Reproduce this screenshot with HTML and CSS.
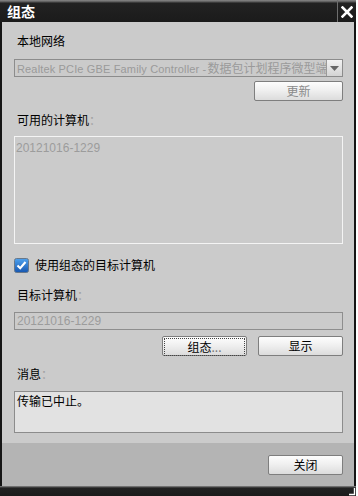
FILE: index.html
```html
<!DOCTYPE html>
<html lang="zh">
<head>
<meta charset="utf-8">
<link rel="stylesheet" href="styles.css">
</head>
<body>
<div class="window">
  <div class="titlebar">
    <div class="title">组态</div>
    <div class="close">
      <svg width="12" height="12" viewBox="0 0 12 12"><path d="M1.5 1.5 L10.5 10.5 M10.5 1.5 L1.5 10.5" stroke="#fff" stroke-width="2.6" stroke-linecap="square"/></svg>
    </div>
  </div>
  <div class="content">
    <div class="label l1">本地网络</div>
    <div class="select">
      <div class="select-text">Realtek PCIe GBE Family Controller -<span class="cjk">数据包计划程序微型端</span></div>
      <div class="select-arrow"><svg width="9" height="5" viewBox="0 0 9 5"><path d="M0 0 H9 L4.5 5 Z" fill="#666"/></svg></div>
    </div>
    <div class="row-right"><div class="btn btn-refresh">更新</div></div>
    <div class="label l2">可用的计算机<span class="colon">：</span></div>
    <div class="listbox">20121016-1229</div>
    <div class="check-row">
      <svg class="checkbox" width="15" height="15" viewBox="0 0 15 15">
        <defs><linearGradient id="cb" x1="0" y1="0" x2="0" y2="1"><stop offset="0" stop-color="#4fa2ee"/><stop offset="1" stop-color="#1656b0"/></linearGradient></defs>
        <rect x="0.5" y="0.5" width="14" height="14" rx="2" fill="url(#cb)" stroke="#68788a"/>
        <path d="M3.5 7.5 L6.2 10.2 L11.5 4" stroke="#fff" stroke-width="2.1" fill="none"/>
      </svg>
      <span class="check-label">使用组态的目标计算机</span>
    </div>
    <div class="label l3">目标计算机<span class="colon">：</span></div>
    <div class="field">20121016-1229</div>
    <div class="row-right btn-row">
      <div class="btn btn-mid focus"><span class="focus-ring">组态<span class="dots">...</span></span></div>
      <div class="btn btn-mid">显示</div>
    </div>
    <div class="label l4">消息<span class="colon">：</span></div>
    <div class="msgbox">传输已中止。</div>
  </div>
  <div class="footer">
    <div class="btn btn-close">关闭</div>
  </div>
  <div class="bottombar">
    <svg class="grip" width="7" height="8" viewBox="0 0 7 8"><path d="M5.5 0 V6.5 H0" stroke="#fff" stroke-width="1.4" fill="none"/></svg>
  </div>
</div>
</body>
</html>
```

FILE: styles.css
```css
html, body {
  margin: 0;
  padding: 0;
  background: #ffffff;
}
body {
  font-family: "Liberation Sans", "Noto Sans CJK SC", sans-serif;
  font-size: 12px;
  color: #000;
}
.window {
  width: 356px;
  height: 496px;
  display: flex;
  flex-direction: column;
  position: relative;
}
.titlebar {
  height: 22px;
  flex: none;
  display: flex;
  background: linear-gradient(to bottom, #8a8a8a 0, #555 2px, #222 3px, #1b1b1b 100%);
}
.title {
  flex: 1;
  color: #fff;
  font-family: "Noto Sans CJK SC", sans-serif;
  font-weight: bold;
  font-size: 14px;
  line-height: 22px;
  padding-left: 7px;
}
.close {
  width: 18px;
  border-left: 1px solid #6e6e6e;
  display: flex;
  align-items: center;
  justify-content: center;
  padding-top: 1px;
}
.content {
  flex: none;
  height: 421px;
  box-sizing: border-box;
  background: #cbcbcb;
  border-left: 2px solid #151515;
  border-right: 2px solid #151515;
  padding: 0 11px 0 12px;
  display: flex;
  flex-direction: column;
}
.label {
  height: 16px;
  line-height: 16px;
  font-family: "Noto Sans CJK SC", sans-serif;
  font-size: 12px;
  padding-left: 3px;
}
.colon { color: #a0a0a0; }
.l1 { margin-top: 11px; }
.select {
  margin-top: 10px;
  height: 18px;
  border: 1px solid #8c8c8c;
  display: flex;
  box-sizing: border-box;
  overflow: hidden;
}
.select-text {
  flex: 1;
  white-space: nowrap;
  overflow: hidden;
  color: #9a9a9a;
  font-size: 11px;
  line-height: 16px;
  padding-left: 2px;
  letter-spacing: 0.15px;
}
.select-text .cjk {
  font-family: "Noto Sans CJK SC", sans-serif;
  font-size: 12px;
  letter-spacing: 0;
  margin-left: 1px;
}
.select-arrow {
  width: 15px;
  flex: none;
  border-left: 1px solid #9a9a9a;
  background: linear-gradient(to bottom, #f2f2f2, #d4d4d4);
  display: flex;
  align-items: center;
  justify-content: center;
}
.row-right {
  display: flex;
  justify-content: flex-end;
}
.btn {
  box-sizing: border-box;
  height: 20px;
  border: 1px solid #7e7e7e;
  border-radius: 2px;
  background: linear-gradient(to bottom, #fdfdfd 0%, #f0f0f0 45%, #dcdcdc 100%);
  font-family: "Noto Sans CJK SC", sans-serif;
  font-size: 12px;
  line-height: 18px;
  text-align: center;
  color: #000;
}
.btn-refresh {
  margin-top: 4px;
  width: 89px;
  color: #8a8a8a;
}
.l2 { margin-top: 11px; }
.listbox {
  margin-top: 8px;
  height: 108px;
  box-sizing: border-box;
  border: 1px solid #f4f4f4;
  color: #9c9c9c;
  padding: 3px 0 0 1px;
  line-height: 16px;
}
.check-row {
  margin-top: 13px;
  height: 16px;
  display: flex;
  align-items: center;
}
.checkbox {
  flex: none;
  margin-top: 1px;
}
.check-label {
  margin-left: 6px;
  font-family: "Noto Sans CJK SC", sans-serif;
  line-height: 16px;
}
.l3 { margin-top: 14px; }
.field {
  margin-top: 9px;
  height: 18px;
  box-sizing: border-box;
  border: 1px solid #8e8e8e;
  color: #9c9c9c;
  line-height: 16px;
  padding-left: 2px;
}
.btn-row {
  margin-top: 6px;
  gap: 11px;
}
.btn-mid {
  width: 85px;
}
.focus {
  padding: 1px;
}
.focus-ring {
  display: block;
  height: 16px;
  line-height: 16px;
  border: 1px dotted #444;
}
.dots { color: #777; }
.l4 { margin-top: 10px; }
.msgbox {
  margin-top: 9px;
  height: 42px;
  box-sizing: border-box;
  border: 1px solid #8c8c8c;
  background: #e2e2e2;
  font-family: "Noto Sans CJK SC", sans-serif;
  line-height: 16px;
  padding: 1px 0 0 2px;
}
.footer {
  flex: none;
  height: 43px;
  box-sizing: border-box;
  background: #b4b4b4;
  border-left: 2px solid #151515;
  border-right: 2px solid #151515;
  padding: 12px 11px 0 0;
  display: flex;
  justify-content: flex-end;
  align-items: flex-start;
}
.btn-close {
  width: 75px;
}
.bottombar {
  flex: 1;
  background: linear-gradient(to bottom, #8a8a8a 0, #555 1px, #222 2px, #1b1b1b 100%);
}
.grip {
  position: absolute;
  right: 0;
  bottom: 0;
}
```
